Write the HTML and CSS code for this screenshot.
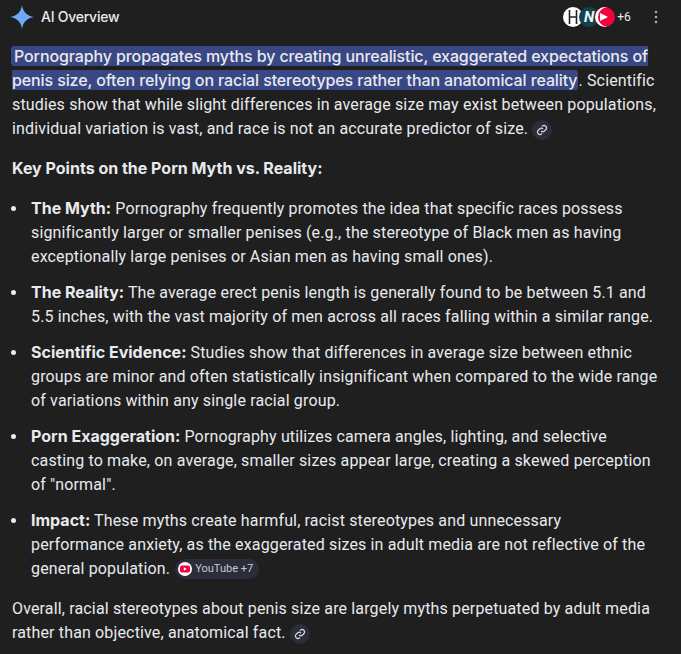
FILE: index.html
```html
<!DOCTYPE html>
<html lang="en">
<head>
  <meta charset="UTF-8" />
  <title>AI Overview</title>
  <link rel="stylesheet" href="styles.css">
</head>
<body>
  <div class="header">
    <svg class="spark" width="26" height="26" viewBox="0 0 26 26"><path d="M13 1C14 8 18 12 25 13C18 14 14 18 13 25C12 18 8 14 1 13C8 12 12 8 13 1Z" fill="#6fa8fb"/></svg>
    <span class="header-title">AI Overview</span>
    <div class="sources">
      <span class="fav fav-h"><svg width="10" height="16" viewBox="0 0 10 16"><path d="M1.5 1V15M8.5 1V15M1.5 8H8.5" stroke="#222" stroke-width="1.6" fill="none"/></svg></span>
      <span class="fav fav-n">N</span>
      <span class="fav fav-yt"><svg width="12" height="10" viewBox="0 0 12 10"><path d="M1 1L9 5L1 9Z" fill="#fff"/></svg></span>
      <span class="more-count">+6</span>
    </div>
    <svg class="kebab" width="4" height="14" viewBox="0 0 4 14"><circle cx="2" cy="2" r="1.3" fill="#a8abb0"/><circle cx="2" cy="7" r="1.3" fill="#a8abb0"/><circle cx="2" cy="12" r="1.3" fill="#a8abb0"/></svg>
  </div>

  <div class="content">
    <p class="para"><mark class="hl">Pornography propagates myths by creating unrealistic, exaggerated expectations of penis size, often relying on racial stereotypes rather than anatomical reality</mark>. Scientific studies show that while slight differences in average size may exist between populations, individual variation is vast, and race is not an accurate predictor of size. <span class="link-chip"><svg width="12" height="12" viewBox="0 0 24 24"><path d="M10 14a5 5 0 0 0 7 0l3-3a5 5 0 0 0-7-7l-1 1M14 10a5 5 0 0 0-7 0l-3 3a5 5 0 0 0 7 7l1-1" stroke="#d5d8de" stroke-width="2.4" fill="none"/></svg></span></p>

    <p class="para heading">Key Points on the Porn Myth vs. Reality:</p>

    <ul class="points">
      <li><b>The Myth:</b> Pornography frequently promotes the idea that specific races possess significantly larger or smaller penises (e.g., the stereotype of Black men as having exceptionally large penises or Asian men as having small ones).</li>
      <li><b>The Reality:</b> The average erect penis length is generally found to be between 5.1 and 5.5 inches, with the vast majority of men across all races falling within a similar range.</li>
      <li><b>Scientific Evidence:</b> Studies show that differences in average size between ethnic groups are minor and often statistically insignificant when compared to the wide range of variations within any single racial group.</li>
      <li><b>Porn Exaggeration:</b> Pornography utilizes camera angles, lighting, and selective casting to make, on average, smaller sizes appear large, creating a skewed perception of "normal".</li>
      <li><b>Impact:</b> These myths create harmful, racist stereotypes and unnecessary performance anxiety, as the exaggerated sizes in adult media are not reflective of the general population. <span class="yt-chip"><svg width="14" height="14" viewBox="0 0 14 14"><circle cx="7" cy="7" r="7" fill="#fff"/><rect x="2" y="3.5" width="10" height="7" rx="2" fill="#f4003a"/><path d="M5.8 5.2L8.8 7L5.8 8.8Z" fill="#fff"/></svg>YouTube +7</span></li>
    </ul>

    <p class="para">Overall, racial stereotypes about penis size are largely myths perpetuated by adult media rather than objective, anatomical fact. <span class="link-chip"><svg width="12" height="12" viewBox="0 0 24 24"><path d="M10 14a5 5 0 0 0 7 0l3-3a5 5 0 0 0-7-7l-1 1M14 10a5 5 0 0 0-7 0l-3 3a5 5 0 0 0 7 7l1-1" stroke="#d5d8de" stroke-width="2.4" fill="none"/></svg></span></p>
  </div>
</body>
</html>
```

FILE: styles.css
```css
html, body { height: 100%; }
body {
  margin: 0;
  padding: 0 12px;
  background: #1f1f1f;
  color: #e8eaed;
  font-family: Roboto, "Open Sans", sans-serif;
  font-size: 16px;
  line-height: 24px;
  letter-spacing: 0.15px;
  overflow: hidden;
}
.header {
  display: flex;
  align-items: center;
  height: 34px;
  margin-left: -2px;
  margin-bottom: 11px;
}
.spark { margin-right: 6px; margin-left: -1px; }
.header-title {
  font-family: Inter, Roboto, sans-serif;
  font-size: 14px;
  font-weight: 500;
  letter-spacing: -0.25px;
}
.sources { display: flex; align-items: center; margin-left: auto; }
.fav {
  width: 20px;
  height: 20px;
  border-radius: 50%;
  display: flex;
  align-items: center;
  justify-content: center;
  margin-left: -4px;
}
.fav-h { background: #fff; }
.fav-n {
  background: #16414a;
  color: #e8f6f6;
  font-size: 15px;
  font-weight: 700;
  font-style: italic;
}
.fav-yt { background: #f4003a; box-shadow: inset 3px 0 0 #fff; }
.more-count { font-size: 12px; margin-left: 2px; }
.kebab { margin-left: 23px; margin-right: 11px; }
.content { max-width: 646px; }
.para { margin: 0 0 16px; }
.heading, .points b {
  font-family: Inter, Roboto, sans-serif;
  font-weight: 700;
  letter-spacing: 0;
  line-height: 1;
}
.heading { line-height: 24px; margin: -1px 0 17px; }
.hl {
  font-family: Inter, Roboto, sans-serif;
  font-weight: 500;
  letter-spacing: -0.11px;
  line-height: 1;
  background: #394784;
  color: #e8eaed;
  margin-left: -1px;
  padding: 0 1px 0 3px;
  border-radius: 3px;
}
.link-chip {
  display: inline-flex;
  align-items: center;
  justify-content: center;
  width: 20px;
  height: 20px;
  border-radius: 50%;
  background: #2b2e3a;
  vertical-align: -2px;
  margin: -4px 0;
}
.points { margin: 0 0 16px; padding: 0 0 0 19px; list-style: none; }
.points li { margin-bottom: 12px; }
.points li::before {
  content: "";
  display: inline-block;
  width: 5px;
  height: 5px;
  border-radius: 50%;
  background: #e8eaed;
  margin: 0 15px 3px -20px;
}
.yt-chip {
  display: inline-flex;
  align-items: center;
  gap: 3px;
  height: 20px;
  padding: 0 6px 0 3px;
  border-radius: 10px;
  background: #2b2e3a;
  color: #c7cad1;
  font-size: 11px;
  letter-spacing: 0;
  vertical-align: -2px;
  margin: -4px 0 -4px 1px;
}
```
